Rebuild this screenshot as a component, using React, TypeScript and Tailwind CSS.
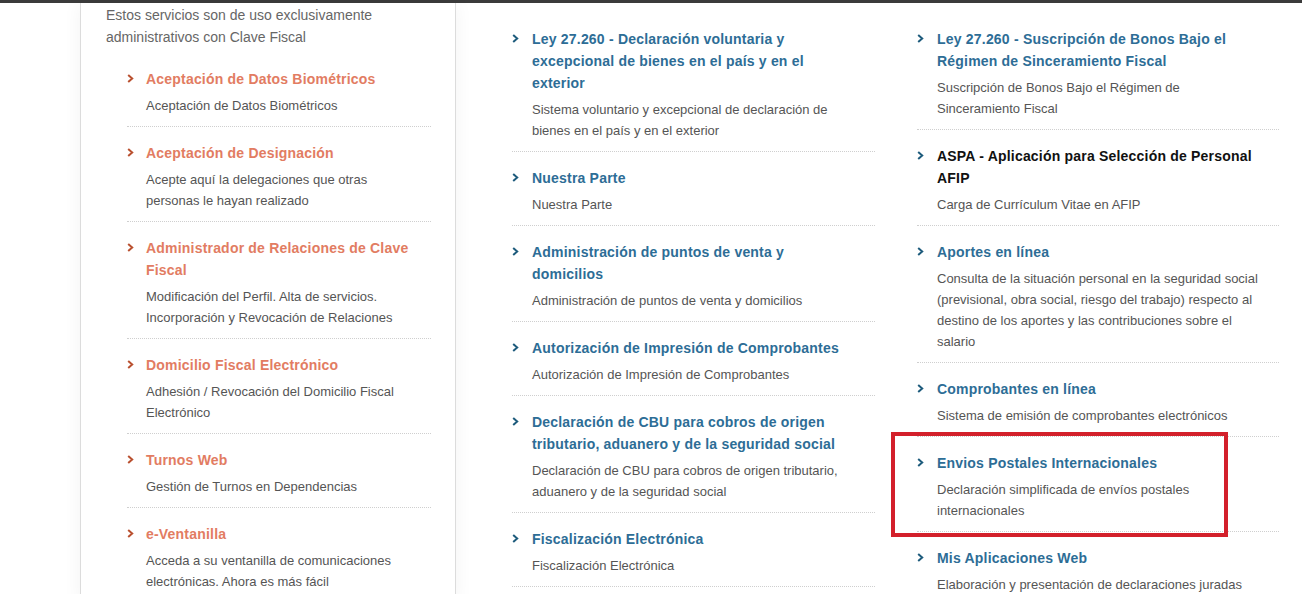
import React from "react";

type Service = {
  title: string;
  desc: string;
  dark?: boolean;
  marked?: boolean;
};

const clave: Service[] = [
  { title: "Aceptación de Datos Biométricos", desc: "Aceptación de Datos Biométricos" },
  { title: "Aceptación de Designación", desc: "Acepte aquí la delegaciones que otras personas le hayan realizado" },
  { title: "Administrador de Relaciones de Clave Fiscal", desc: "Modificación del Perfil. Alta de servicios. Incorporación y Revocación de Relaciones" },
  { title: "Domicilio Fiscal Electrónico", desc: "Adhesión / Revocación del Domicilio Fiscal Electrónico" },
  { title: "Turnos Web", desc: "Gestión de Turnos en Dependencias" },
  { title: "e-Ventanilla", desc: "Acceda a su ventanilla de comunicaciones electrónicas. Ahora es más fácil" },
];

const middle: Service[] = [
  { title: "Ley 27.260 - Declaración voluntaria y excepcional de bienes en el país y en el exterior", desc: "Sistema voluntario y excepcional de declaración de bienes en el país y en el exterior" },
  { title: "Nuestra Parte", desc: "Nuestra Parte" },
  { title: "Administración de puntos de venta y domicilios", desc: "Administración de puntos de venta y domicilios" },
  { title: "Autorización de Impresión de Comprobantes", desc: "Autorización de Impresión de Comprobantes" },
  { title: "Declaración de CBU para cobros de origen tributario, aduanero y de la seguridad social", desc: "Declaración de CBU para cobros de origen tributario, aduanero y de la seguridad social" },
  { title: "Fiscalización Electrónica", desc: "Fiscalización Electrónica" },
];

const right: Service[] = [
  { title: "Ley 27.260 - Suscripción de Bonos Bajo el Régimen de Sinceramiento Fiscal", desc: "Suscripción de Bonos Bajo el Régimen de Sinceramiento Fiscal" },
  { title: "ASPA - Aplicación para Selección de Personal AFIP", desc: "Carga de Currículum Vitae en AFIP", dark: true },
  { title: "Aportes en línea", desc: "Consulta de la situación personal en la seguridad social (previsional, obra social, riesgo del trabajo) respecto al destino de los aportes y las contribuciones sobre el salario" },
  { title: "Comprobantes en línea", desc: "Sistema de emisión de comprobantes electrónicos" },
  { title: "Envios Postales Internacionales", desc: "Declaración simplificada de envíos postales internacionales", marked: true },
  { title: "Mis Aplicaciones Web", desc: "Elaboración y presentación de declaraciones juradas" },
];

function Chevron({ color }: { color: string }) {
  return (
    <svg width="7" height="9" viewBox="0 0 7 9" className="mt-[6px]" style={{ color }}>
      <path d="M1.2 1 L5.2 4.5 L1.2 8" fill="none" stroke="currentColor" strokeWidth="2" />
    </svg>
  );
}

function ServiceItem({
  item,
  orange,
  indent,
  padRight,
}: {
  item: Service;
  orange?: boolean;
  indent: string;
  padRight: string;
}) {
  const titleColor = orange ? "text-[#e27c62]" : item.dark ? "text-[#111]" : "text-[#2d6d96]";
  return (
    <li className="relative border-b border-dotted border-[#cfcfcf] pt-[15px] pb-[10px]">
      {item.marked && (
        <div className="pointer-events-none absolute left-[-26px] top-[-5px] h-[105px] w-[337px] border-4 border-[#d3202b]" />
      )}
      <div className={`flex ${padRight}`}>
        <div className={`${indent} shrink-0`}>
          <Chevron color={orange ? "#b9502f" : "#1d5b7c"} />
        </div>
        <div className="flex-1">
          <a className={`block text-[14px] font-bold leading-[22px] tracking-[0.2px] ${titleColor}`}>{item.title}</a>
          <p className="mt-[5px] text-[13px] leading-[21px] text-[#555]">{item.desc}</p>
        </div>
      </div>
    </li>
  );
}

export default function App() {
  return (
    <div className="min-h-screen bg-white font-['Liberation_Sans',Arial,sans-serif]">
      <div className="h-[3px] bg-[#3b3b3b]" />
      <div className="flex items-start">
        {/* Clave fiscal panel */}
        <section className="ml-20 w-[376px] shrink-0 border-x border-[#dcdcdc] bg-white shadow-[0_0_18px_rgba(0,0,0,0.05)]">
          <p className="pl-[25px] pt-px text-[14px] leading-[22px] text-[#666]">
            Estos servicios son de uso exclusivamente
            <br />
            administrativos con Clave Fiscal
          </p>
          <ul className="mt-[5px] pl-[46px] pr-[24px]">
            {clave.map((s) => (
              <ServiceItem key={s.title} item={s} orange indent="w-[19px]" padRight="pr-[13px]" />
            ))}
          </ul>
        </section>

        <ul className="ml-[56px] w-[363px] shrink-0 pt-[10px]">
          {middle.map((s) => (
            <ServiceItem key={s.title} item={s} indent="w-[20px]" padRight="pr-[25px]" />
          ))}
        </ul>

        <ul className="ml-[42px] w-[362px] shrink-0 pt-[10px]">
          {right.map((s) => (
            <ServiceItem key={s.title} item={s} indent="w-[20px]" padRight="pr-[17px]" />
          ))}
        </ul>
      </div>
    </div>
  );
}
